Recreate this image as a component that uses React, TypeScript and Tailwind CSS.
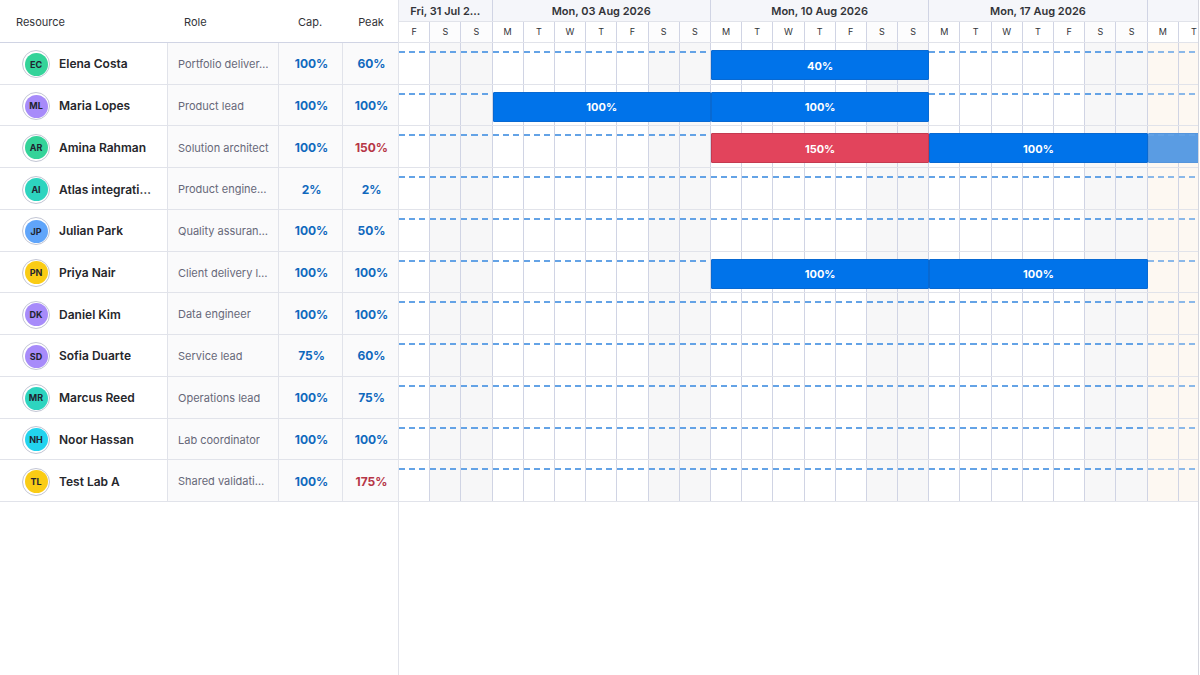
import clsx from "clsx";

interface Bar {
  label: string;
  place: string;
  tone: string;
}

interface Resource {
  initials: string;
  name: string;
  role: string;
  cap: string;
  peak: string;
  color: string;
  over?: boolean;
  bars?: Bar[];
}

const BLUE = "bg-[#0073ea] border-[#0869d2]";
const RED = "bg-[#e2445c] border-[#c43a50]";
const FADED = "bg-[#5a9ce3] border-[#5595dc]";

const WEEK_1 = "col-start-4 col-span-7";
const WEEK_2 = "col-start-11 col-span-7";
const WEEK_3 = "col-start-18 col-span-7";
const WEEK_4 = "col-start-25 col-span-2";

const resources: Resource[] = [
  { initials: "EC", name: "Elena Costa", role: "Portfolio deliver…", cap: "100%", peak: "60%", color: "bg-[#34d399]",
    bars: [{ label: "40%", place: WEEK_2, tone: BLUE }] },
  { initials: "ML", name: "Maria Lopes", role: "Product lead", cap: "100%", peak: "100%", color: "bg-[#a78bfa]",
    bars: [{ label: "100%", place: WEEK_1, tone: BLUE }, { label: "100%", place: WEEK_2, tone: BLUE }] },
  { initials: "AR", name: "Amina Rahman", role: "Solution architect", cap: "100%", peak: "150%", color: "bg-[#34d399]", over: true,
    bars: [{ label: "150%", place: WEEK_2, tone: RED }, { label: "100%", place: WEEK_3, tone: BLUE }, { label: "", place: WEEK_4, tone: FADED }] },
  { initials: "AI", name: "Atlas integrati…", role: "Product engine…", cap: "2%", peak: "2%", color: "bg-[#2dd4bf]" },
  { initials: "JP", name: "Julian Park", role: "Quality assuran…", cap: "100%", peak: "50%", color: "bg-[#60a5fa]" },
  { initials: "PN", name: "Priya Nair", role: "Client delivery l…", cap: "100%", peak: "100%", color: "bg-[#facc15]",
    bars: [{ label: "100%", place: WEEK_2, tone: BLUE }, { label: "100%", place: WEEK_3, tone: BLUE }] },
  { initials: "DK", name: "Daniel Kim", role: "Data engineer", cap: "100%", peak: "100%", color: "bg-[#a78bfa]" },
  { initials: "SD", name: "Sofia Duarte", role: "Service lead", cap: "75%", peak: "60%", color: "bg-[#a78bfa]" },
  { initials: "MR", name: "Marcus Reed", role: "Operations lead", cap: "100%", peak: "75%", color: "bg-[#2dd4bf]" },
  { initials: "NH", name: "Noor Hassan", role: "Lab coordinator", cap: "100%", peak: "100%", color: "bg-[#22d3ee]" },
  { initials: "TL", name: "Test Lab A", role: "Shared validati…", cap: "100%", peak: "175%", color: "bg-[#facc15]", over: true },
];

const weeks = [
  { label: "Fri, 31 Jul 2…", span: "col-span-3" },
  { label: "Mon, 03 Aug 2026", span: "col-span-7" },
  { label: "Mon, 10 Aug 2026", span: "col-span-7" },
  { label: "Mon, 17 Aug 2026", span: "col-span-7" },
  { label: "", span: "col-span-2" },
];

const days = "FSSMTWTFSSMTWTFSSMTWTFSSMT".split("");

const columns = "grid grid-cols-[167px_111px_64px_56px]";
const timeline = "grid grid-cols-[repeat(26,minmax(0,1fr))]";
const cell = "flex min-w-0 items-center border-l border-[#e1e3ea] bg-[#fafafb] pt-0.5";
const dashes =
  "mt-2 h-[2px] bg-[repeating-linear-gradient(90deg,#64a3e6_0_20%,transparent_20%_33.33%)]";

const ResourceTable = () => (
  <table className="block w-[399px] shrink-0 border-r border-[#e1e3ea]">
    <thead className="block">
      <tr className={clsx(columns, "h-[43px] items-center border-b border-[#d0d4e4] pt-0.5 text-[11px] text-[#323338]")}>
        <th className="pl-4 text-left font-normal">Resource</th>
        <th className="pl-[17px] text-left font-normal">Role</th>
        <th className="text-center font-normal">Cap.</th>
        <th className="pl-0.5 text-center font-normal">Peak</th>
      </tr>
    </thead>
    <tbody className="grid min-h-[459px] auto-rows-fr">
      {resources.map((r) => (
        <tr key={r.initials} className={clsx(columns, "border-b border-[#e1e3ea]")}>
          <td className="flex min-w-0 items-center gap-[9px] pt-0.5 pl-[22px]">
            <span className="flex size-7 shrink-0 items-center justify-center rounded-full border border-[#c3c6d4] bg-white">
              <span className={clsx("flex size-[23px] items-center justify-center rounded-full text-[9px] font-bold text-[#1f2430]", r.color)}>
                {r.initials}
              </span>
            </span>
            <span className="truncate text-xs font-semibold text-[#26272c]">{r.name}</span>
          </td>
          <td className={clsx(cell, "pl-[10px] text-[11px] text-[#676879]")}>
            <span className="truncate">{r.role}</span>
          </td>
          <td className={clsx(cell, "justify-center pl-0.5 text-xs font-bold text-[#0f68bd]")}>{r.cap}</td>
          <td className={clsx(cell, "justify-center pl-0.5 text-xs font-bold", r.over ? "text-[#b63546]" : "text-[#0f68bd]")}>
            {r.peak}
          </td>
        </tr>
      ))}
    </tbody>
  </table>
);

const TimelineRow = ({ bars = [] }: { bars?: Bar[] }) => (
  <div className={clsx(timeline, "grid-rows-1 border-b border-[#e1e3ea]")}>
    {days.map((day, i) => (
      <div
        key={i}
        style={{ gridColumnStart: i + 1 }}
        className={clsx(
          "row-start-1 border-r border-[#d0d4e4]",
          day === "S" && "bg-[#f7f7f8]",
          i > 23 && "bg-[#fdf8f2]",
        )}
      >
        <div className={clsx(dashes, i > 23 && "opacity-75")} />
      </div>
    ))}
    {bars.map((bar) => (
      <div
        key={bar.place}
        className={clsx(
          "row-start-1 mt-[7px] flex h-[30px] items-center justify-center rounded-[1px] border pt-0.5 text-[11px] font-bold text-white",
          bar.place,
          bar.tone,
        )}
      >
        {bar.label}
      </div>
    ))}
  </div>
);

const Timeline = () => (
  <section className="mr-px min-w-0 flex-1 overflow-hidden border-r border-[#d4d6de]">
    <div className="w-[811px]">
      <div className={clsx(timeline, "h-[22px] border-b border-[#e1e3ea] bg-[#f5f6fa]")}>
        {weeks.map((week) => (
          <div
            key={week.label}
            className={clsx("flex min-w-0 items-center justify-center border-r border-[#d0d4e4] px-1 pt-0.5 text-[11px] font-semibold text-[#323338]", week.span)}
          >
            <span className="truncate">{week.label}</span>
          </div>
        ))}
      </div>
      <div className={clsx(timeline, "h-[21px] border-b border-[#e1e3ea]")}>
        {days.map((day, i) => (
          <div
            key={i}
            className={clsx("flex items-center justify-center border-r border-[#d0d4e4] text-[9px] text-[#323338]", day === "S" && "bg-[#fcfcfd]")}
          >
            {day}
          </div>
        ))}
      </div>
      <div className="grid min-h-[459px] auto-rows-fr">
        {resources.map((r) => (
          <TimelineRow key={r.initials} bars={r.bars} />
        ))}
      </div>
    </div>
  </section>
);

export default function App() {
  return (
    <main className="flex min-h-screen overflow-hidden bg-white font-['Inter',sans-serif]">
      <ResourceTable />
      <Timeline />
    </main>
  );
}
